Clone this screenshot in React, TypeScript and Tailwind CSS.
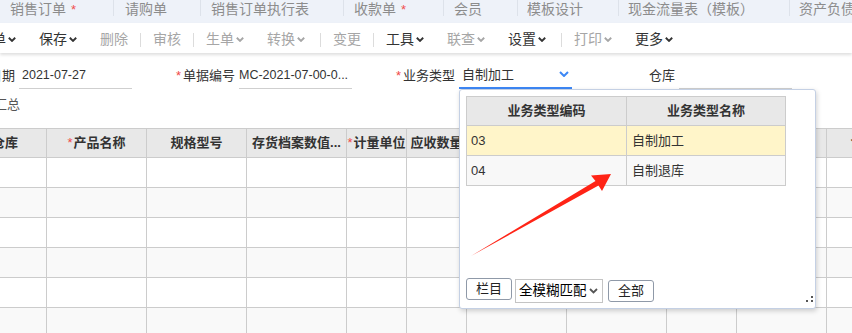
import React from "react";

function Chev({ c }: { c: string }) {
  return (
    <svg width="8" height="5" viewBox="0 0 8 5" className="shrink-0">
      <path d="M0.8 0.8 L4 3.9 L7.2 0.8" stroke={c} strokeWidth="1.9" fill="none" />
    </svg>
  );
}

const tabs: { t: string; w: number; pl: number; star?: boolean }[] = [
  { t: "销售订单", w: 113, pl: 10, star: true },
  { t: "请购单", w: 87, pl: 12 },
  { t: "销售订单执行表", w: 143, pl: 11 },
  { t: "收款单", w: 100, pl: 11, star: true },
  { t: "会员", w: 74, pl: 11 },
  { t: "模板设计", w: 101, pl: 10 },
  { t: "现金流量表（模板）", w: 171, pl: 10 },
  { t: "资产负债表", w: 120, pl: 10 },
];

type Tool = { t?: string; chev?: boolean; dark?: boolean; sep?: boolean; wide?: boolean };
const tools: Tool[] = [
  { t: "单", chev: true, dark: true },
  { t: "保存", chev: true, dark: true },
  { t: "删除" },
  { sep: true },
  { t: "审核" },
  { sep: true },
  { t: "生单", chev: true },
  { t: "转换", chev: true, wide: true },
  { sep: true },
  { t: "变更" },
  { sep: true },
  { t: "工具", chev: true, dark: true },
  { t: "联查", chev: true },
  { t: "设置", chev: true, dark: true, wide: true },
  { sep: true },
  { t: "打印", chev: true },
  { t: "更多", chev: true, dark: true },
];

const cols: { w: number; label: string; star?: boolean }[] = [
  { w: 83, label: "仓库" },
  { w: 100, label: "产品名称", star: true },
  { w: 100, label: "规格型号" },
  { w: 100, label: "存货档案数值..." },
  { w: 60, label: "计量单位", star: true },
  { w: 60, label: "应收数量" },
  { w: 100, label: "" },
  { w: 100, label: "" },
  { w: 70, label: "" },
  { w: 90, label: "" },
  { w: 100, label: "含税单价" },
];

function Field({
  label,
  star,
  value,
  active,
  flush,
}: {
  label: string;
  star?: boolean;
  value: string;
  active?: boolean;
  flush?: boolean;
}) {
  return (
    <div className="flex h-[27px] w-[220px] shrink-0">
      <div className="flex w-[107px] items-center justify-end pr-[4px] text-[13px] text-[#333]">
        {star && <span className="mr-[2px] text-[#f04848]">*</span>}
        <span>{label}</span>
      </div>
      <div
        className={
          active
            ? "relative flex w-[113px] items-center border-b-2 border-[#3d87f5] pl-[3px] text-[13px] text-[#333]"
            : "flex w-[113px] items-center overflow-hidden whitespace-nowrap border-b border-[#cfcfcf] text-[12.5px] text-[#333] " +
              (flush ? "pl-0" : "pl-[3px]")
        }
      >
        {value}
        {active && (
          <span className="absolute right-[3px] top-[9px]">
            <svg width="10" height="6" viewBox="0 0 10 6">
              <path d="M1 1 L5 5 L9 1" stroke="#3d87f5" strokeWidth="2" fill="none" />
            </svg>
          </span>
        )}
      </div>
    </div>
  );
}

export default function App() {
  const rows = [0, 1, 2, 3, 4, 5];
  return (
    <div className="relative h-[333px] w-[852px] overflow-hidden bg-white font-['Liberation_Sans','Noto_Sans_CJK_SC',sans-serif]">
      {/* tab bar */}
      <div className="flex h-[23px] bg-[#eef2f9] text-[14px] leading-[18px] text-[#8c8c8c] whitespace-nowrap">
        {tabs.map((tb, i) => (
          <div key={i} className="flex shrink-0 items-start" style={{ width: tb.w }}>
            {i > 0 && <div className="h-[16px] w-[1px] shrink-0 bg-[#dde2ea]" />}
            <div style={{ paddingLeft: tb.pl - (i > 0 ? 1 : 0) }}>
              {tb.t}
              {tb.star && <span className="ml-[5px] text-[13px] text-[#f05050]">*</span>}
            </div>
          </div>
        ))}
      </div>

      {/* toolbar */}
      <div className="relative z-10 h-[30px] bg-white shadow-[0_2px_3px_rgba(0,0,0,0.13)]">
        <div className="ml-[-20px] flex h-[30px] items-center pt-[3px] text-[14px] whitespace-nowrap">
          {tools.map((tl, i) =>
            tl.sep ? (
              <div key={i} className="h-[14px] w-[1px] shrink-0 bg-[#dcdcdc]" />
            ) : (
              <div
                key={i}
                className={
                  "flex shrink-0 items-center pl-[12px] " +
                  (tl.chev ? (tl.wide ? "pr-[15px] " : "pr-[11px] ") : "pr-[12px] ") +
                  (tl.dark ? "text-[#333]" : "text-[#a6a6a6]")
                }
              >
                <span>{tl.t}</span>
                {tl.chev && (
                  <span className="ml-[2px] flex">
                    <Chev c={tl.dark ? "#333" : "#a6a6a6"} />
                  </span>
                )}
              </div>
            )
          )}
        </div>
      </div>

      {/* form row */}
      <div className="h-[36px] pt-[9px]">
        <div className="ml-[-88px] flex">
          <Field label="日期" value="2021-07-27" />
          <Field label="单据编号" star value="MC-2021-07-00-0..." flush />
          <Field label="业务类型" star value="自制加工" active />
          <Field label="仓库" value="" />
        </div>
      </div>

      {/* summary */}
      <div className="h-[39px] pt-[6px]">
        <div className="ml-[-6px] text-[13px] leading-[20px] text-[#555]">汇总</div>
      </div>

      {/* table */}
      <div className="ml-[-36px] w-[963px] border-t border-[#cccccc]">
        <div className="flex bg-[#e8e8e8]">
          {cols.map((c, i) => (
            <div
              key={i}
              className="flex h-[29px] shrink-0 items-center justify-center overflow-hidden whitespace-nowrap border-b border-r border-[#cccccc] text-[13px] font-bold text-[#333]"
              style={{ width: c.w }}
            >
              {c.star && <span className="mr-[1px] font-normal text-[#f04848]">*</span>}
              {c.label}
            </div>
          ))}
        </div>
        {rows.map((r) => (
          <div key={r} className={"flex " + (r % 2 === 1 ? "bg-[#f9f9f9]" : "bg-white")}>
            {cols.map((c, i) => (
              <div
                key={i}
                className="h-[30px] shrink-0 border-b border-r border-[#cccccc]"
                style={{ width: c.w }}
              />
            ))}
          </div>
        ))}
      </div>

      {/* popup */}
      <div className="absolute left-[459px] top-[89px] z-20 flex h-[220px] w-[357px] flex-col justify-between rounded-[3px] border border-[#c4d0e4] bg-white px-[6px] pb-[5px] pt-[6px] shadow-[1px_2px_5px_rgba(0,0,0,0.18)]">
        <div className="w-[320px] border-l border-t border-[#cccccc] text-[13px] text-[#333]">
          <div className="flex bg-[#e8e8e8] font-bold">
            <div className="flex h-[29px] w-[160px] items-center justify-center border-b border-r border-[#cccccc]">
              业务类型编码
            </div>
            <div className="flex h-[29px] w-[159px] items-center justify-center border-b border-r border-[#cccccc]">
              业务类型名称
            </div>
          </div>
          <div className="flex bg-[#fff5c9]">
            <div className="flex h-[30px] w-[160px] items-center border-b border-r border-[#cccccc] pl-[4px]">
              03
            </div>
            <div className="flex h-[30px] w-[159px] items-center border-b border-r border-[#cccccc] pl-[5px]">
              自制加工
            </div>
          </div>
          <div className="flex bg-[#f8f8f8]">
            <div className="flex h-[30px] w-[160px] items-center border-b border-r border-[#cccccc] pl-[4px]">
              04
            </div>
            <div className="flex h-[30px] w-[159px] items-center border-b border-r border-[#cccccc] pl-[5px]">
              自制退库
            </div>
          </div>
        </div>

        <div className="flex h-[25px] items-start text-[13px] text-[#222]">
          <div className="flex h-[22px] w-[46px] items-center justify-center rounded-[3px] border border-[#8f99a8] bg-white">
            栏目
          </div>
          <div className="ml-[3px] mt-[1px] flex h-[24px] w-[88px] items-center justify-between border border-[#c4c4c4] bg-white pl-[3px] pr-[4px] text-[13.5px] text-black">
            <span>全模糊匹配</span>
            <svg width="9" height="6" viewBox="0 0 9 6">
              <path d="M1 1 L4.5 4.5 L8 1" stroke="#555" strokeWidth="1.8" fill="none" />
            </svg>
          </div>
          <div className="ml-[5px] mt-[2px] flex h-[22px] w-[46px] items-center justify-center rounded-[3px] border border-[#8f99a8] bg-white">
            全部
          </div>
        </div>

        {/* resize grip */}
        <div className="absolute bottom-[6px] right-[2px] h-[6px] w-[7px]">
          <div className="absolute right-0 top-0 h-[2px] w-[2px] bg-[#555]" />
          <div className="absolute bottom-0 right-0 h-[2px] w-[2px] bg-[#555]" />
          <div className="absolute bottom-0 left-0 h-[2px] w-[2px] bg-[#555]" />
        </div>
      </div>

      {/* red annotation arrow */}
      <svg
        className="pointer-events-none absolute left-0 top-0 z-30"
        width="852"
        height="333"
        viewBox="0 0 852 333"
      >
        <polygon
          points="471,256 595.5,181 591,175.5 611,174 602,191 598.5,185.5"
          fill="#ff2416"
        />
      </svg>
    </div>
  );
}
